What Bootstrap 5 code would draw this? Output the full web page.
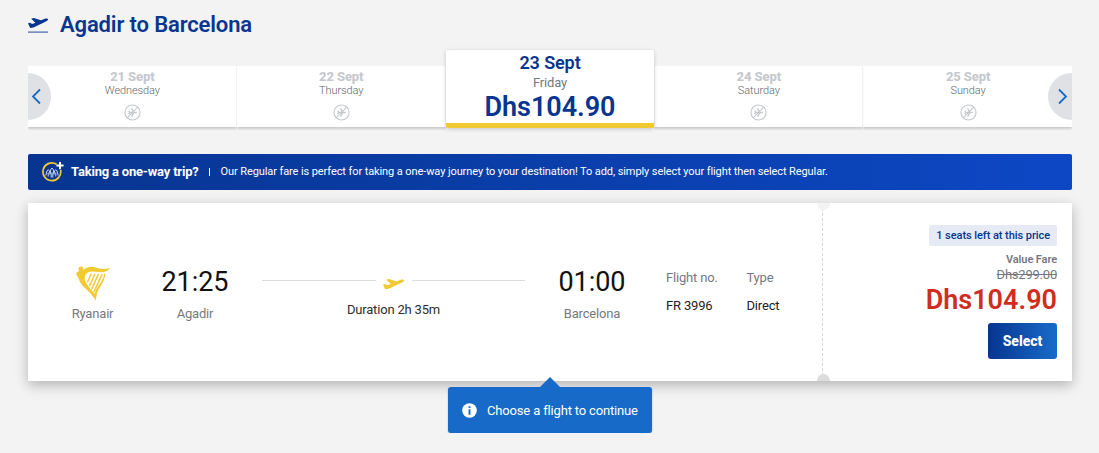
<!DOCTYPE html>
<html lang="en">
<head>
  <meta charset="UTF-8">
  <meta name="viewport" content="width=device-width, initial-scale=1">
  <title>Agadir to Barcelona</title>
  <link href="https://cdn.jsdelivr.net/npm/bootstrap@5.3.0/dist/css/bootstrap.min.css" rel="stylesheet">
  <style>
    body {
        background: #f3f3f3;
        font-family: Roboto, "Liberation Sans", sans-serif;
        color: #2e2e2e;
        overflow: hidden;
    }

    .flights-page {
        width: 1044px;
        margin-left: 28px;
    }

    .txt-navy { color: #073590; }
    .txt-grey { color: #75797f; }

    .journey-title {
        font-size: 22px;
        font-weight: 600;
        line-height: 26px;
        letter-spacing: -0.14px;
        padding-top: 12px;
        height: 50px;
    }

    .journey-title span { margin-left: 12px; }

    /* date carousel */
    .date-strip {
        height: 78px;
    }

    .date-item {
        width: 209px;
        height: 61px;
        margin-bottom: 1px;
        background: #fff;
        border-right: 1px solid #f3f3f3;
        box-shadow: 0 2px 2px rgba(0, 0, 0, 0.16);
        padding: 3px 0 0 1px;
        clip-path: inset(0 0 -6px 0);
    }

    .date-item .date-day {
        font-size: 13px;
        font-weight: 800;
        line-height: 15px;
        letter-spacing: -0.1px;
        color: #c5c8cd;
    }

    .date-item .date-weekday {
        font-size: 11px;
        line-height: 13px;
        letter-spacing: -0.1px;
        color: #62666c;
        font-weight: 300;
        margin-bottom: 7px;
    }

    .date-item.selected {
        height: 78px;
        margin-bottom: 0;
        border-right: 0;
        border-bottom: 5px solid #f1c933;
        border-radius: 2px;
        box-shadow: 0 1px 4px rgba(0, 0, 0, 0.2);
        clip-path: none;
        z-index: 1;
        padding: 2px 0 0;
    }

    .selected .date-day {
        font-size: 18px;
        font-weight: 600;
        line-height: 22px;
        color: #073590;
    }

    .selected .date-weekday {
        font-size: 13px;
        font-weight: 400;
        line-height: 17px;
        letter-spacing: -0.15px;
        margin-bottom: 0;
        color: #75797f;
    }

    .date-price {
        font-size: 27px;
        font-weight: 600;
        line-height: 33px;
        letter-spacing: -0.05px;
        color: #073590;
    }

    .arrow-btn {
        position: absolute;
        top: 23px;
        width: 23px;
        height: 47px;
        background: #dfe1e4;
        border: 0;
        padding: 0;
        z-index: 2;
    }

    .arrow-prev { left: 0; border-radius: 0 24px 24px 0; }
    .arrow-next { right: 0; width: 24px; border-radius: 24px 0 0 24px; }

    /* one way banner */
    .fare-banner {
        margin-top: 26px;
        height: 36px;
        padding-left: 14px;
        border-radius: 2px;
        background: linear-gradient(90deg, #073590, #0d47c4);
        color: #fff;
        font-size: 11px;
        letter-spacing: -0.093px;
    }

    .fare-banner strong {
        font-size: 13px;
        font-weight: 700;
        letter-spacing: -0.2px;
        margin-left: 6px;
    }

    .banner-sep {
        width: 1px;
        height: 8px;
        background: #fff;
        margin: 0 11px 0 10px;
    }

    /* flight card */
    .flight-card {
        margin-top: 13px;
        height: 178px;
        background: #fff;
        box-shadow: 0 4px 12px rgba(0, 0, 0, 0.27);
        font-size: 13px;
        letter-spacing: -0.18px;
    }

    .flight-info {
        width: 795px;
        padding: 62px 0 0 32px;
        border-right: 1px dashed #d8d8d8;
        position: relative;
    }

    .notch {
        position: absolute;
        right: -8px;
        width: 13px;
        height: 7px;
    }

    .notch-top { top: 0; background: #f3f3f3; border-radius: 0 0 7px 7px; }
    .notch-bottom { bottom: 0; background: #dcdcdc; border-radius: 7px 7px 0 0; }

    .airline { width: 65px; }
    .airline svg { height: 38px; }

    .place-time {
        width: 67px;
        margin-left: 36.5px;
        white-space: nowrap;
    }

    .clock {
        font-size: 27px;
        line-height: 35px;
        height: 38px;
        letter-spacing: -0.05px;
        color: #111;
    }

    .place-label { line-height: 22px; }

    .route {
        width: 263px;
        margin: 11px 0 0 33.5px;
    }

    .route-line {
        height: 1px;
        background: #dcdcdc;
        margin-top: 4px;
    }

    .route-duration {
        line-height: 18px;
        margin-top: 7px;
    }

    .place-arrival { margin-left: 33.5px; }

    .detail-col {
        line-height: 18px;
        padding-top: 4px;
    }

    .detail-number {
        width: 80.5px;
        margin-left: 40.5px;
    }

    .detail-col div + div {
        margin-top: 10px;
        color: #222;
    }

    .fare-side {
        padding: 22px 15px 0 0;
    }

    .seats-left {
        background: #e6eaf4;
        border-radius: 2px;
        height: 21px;
        line-height: 21px;
        padding: 0 7px;
        font-size: 11px;
        font-weight: 500;
        letter-spacing: -0.06px;
    }

    .value-fare {
        font-size: 11px;
        font-weight: 600;
        letter-spacing: -0.1px;
        line-height: 15px;
        margin-top: 6px;
    }

    .old-price {
        font-size: 13px;
        line-height: 15px;
        letter-spacing: -0.22px;
    }

    .new-price {
        font-size: 27px;
        font-weight: 600;
        line-height: 31px;
        height: 41px;
        letter-spacing: 0;
        padding-top: 3px;
        color: #d12d1f;
    }

    .select-btn {
        width: 69px;
        height: 36px;
        border: 0;
        border-radius: 3px;
        padding: 0;
        color: #fff;
        font-size: 14px;
        font-weight: 800;
        background: linear-gradient(90deg, #073590, #186bc9);
    }

    /* hint below the card */
    .choose-hint {
        position: relative;
        width: 204px;
        height: 46px;
        margin: 6px 0 0 420px;
        padding: 1px 0 0 14px;
        background: #176ac8;
        border-radius: 3px;
        box-shadow: 0 1px 2px rgba(0, 0, 0, 0.25);
        color: #fff;
        font-size: 13px;
        letter-spacing: -0.16px;
        gap: 10px;
    }

    .choose-hint::before {
        content: "";
        position: absolute;
        left: 92px;
        top: -10px;
        border: 10px solid transparent;
        border-top: 0;
        border-bottom-color: #176ac8;
    }
  </style>
</head>
<body>
<svg width="0" height="0" class="position-absolute">
  <symbol id="plane" viewBox="0 0 20 10">
    <path d="M0 5.200 2 4.800l2.200 1.200L7.400 4.700 3.200.8 5.900 0l7 2.300 4-1.500c1.700-.6 3.100-.2 3.100.7 0 .8-.8 1.300-2.100 1.900L5.500 9.400 2.200 9.900z"/>
  </symbol>
  <symbol id="noFlight" viewBox="0 0 18 18">
    <g fill="none" stroke="#c5c8cd">
      <circle cx="9" cy="9" r="8" stroke-width="1.200"/>
      <path d="M3.300 14.700 14.700 3.300" stroke-width="1.100"/>
      <path d="M5 9h8.500M8 4.600 10.400 9 8 13.400M5 7.200 6.200 9 5 10.800" stroke-width="1.400"/>
    </g>
  </symbol>
</svg>

<main class="flights-page">
  <h1 class="journey-title txt-navy d-flex m-0">
    <svg class="mt-1" width="20" height="18" viewBox="0 0 20 18" fill="#073590">
      <use href="#plane" y="2" width="20" height="10"/>
      <path d="M0 15.500h20v1.200H0z" opacity=".75"/>
    </svg>
    <span>Agadir to Barcelona</span>
  </h1>

  <div class="date-strip d-flex align-items-end text-center position-relative">
    <button class="arrow-btn arrow-prev" aria-label="Previous">
      <svg class="d-block" width="23" height="47" fill="none" stroke="#176ac8" stroke-width="1.800"><path d="M12 16.500 5 23.500l7 7"/></svg>
    </button>
    <div class="date-item">
      <div class="date-day">21 Sept</div>
      <div class="date-weekday">Wednesday</div>
      <svg class="d-block mx-auto" width="17" height="17"><use href="#noFlight"/></svg>
    </div>
    <div class="date-item">
      <div class="date-day">22 Sept</div>
      <div class="date-weekday">Thursday</div>
      <svg class="d-block mx-auto" width="17" height="17"><use href="#noFlight"/></svg>
    </div>
    <div class="date-item selected">
      <div class="date-day">23 Sept</div>
      <div class="date-weekday">Friday</div>
      <div class="date-price">Dhs104.90</div>
    </div>
    <div class="date-item">
      <div class="date-day">24 Sept</div>
      <div class="date-weekday">Saturday</div>
      <svg class="d-block mx-auto" width="17" height="17"><use href="#noFlight"/></svg>
    </div>
    <div class="date-item border-end-0">
      <div class="date-day">25 Sept</div>
      <div class="date-weekday">Sunday</div>
      <svg class="d-block mx-auto" width="17" height="17"><use href="#noFlight"/></svg>
    </div>
    <button class="arrow-btn arrow-next" aria-label="Next">
      <svg class="d-block" width="23" height="47" fill="none" stroke="#176ac8" stroke-width="1.800"><path d="m11 16.500 7 7-7 7"/></svg>
    </button>
  </div>

  <div class="fare-banner d-flex align-items-center text-nowrap">
    <svg width="23" height="22" viewBox="0 0 23 22" fill="none">
      <path d="M14.600 3.200A8.900 8.900 0 1 0 18.600 9" stroke="#f1c933" stroke-width="1.700"/>
      <path d="M18 1v7.200M14.400 4.600h7.200" stroke="#fff" stroke-width="2"/>
      <g stroke="#fff" stroke-width=".8">
        <path d="M3.800 14.500 5 9.800q1.200-2 2.400 0l.5 2.700M6.200 11.500v4M7.900 13.500l.9-5.300q1.200-2 2.400 0l.9 5.300M9.200 11.600v5M10.800 11.600v5M12.100 12.500l.5-2.700q1.200-2 2.400 0l1.200 4.700M13.800 11.500v4"/>
      </g>
    </svg>
    <strong>Taking a one-way trip?</strong>
    <span class="banner-sep"></span>
    <span>Our Regular fare is perfect for taking a one-way journey to your destination! To add, simply select your flight then select Regular.</span>
  </div>

  <div class="flight-card d-flex">
    <div class="flight-info d-flex align-items-start">
      <div class="airline text-center">
        <svg class="d-block mx-auto" width="34" height="38" viewBox="0 0 34 38" fill="#f1c933">
          <path d="M3.200 2.200c1.300-1.300 3.600-.8 4 .9.100.9 0 1.600-.5 2.100C12 1.600 15.600 1.200 19.500 2.600c4.500 1.500 8.500 1.900 14.500.5-2.300 3.600-6.600 4.700-11.300 4C17 6.300 12.500 6 9.700 9.300c-1.600 2.300-1.300 5.500.9 9.200 2.500 4.200 6.600 8.400 8.800 11.300L19.700 35.500C16.500 29.400 10.600 25 6.300 20.300 2.800 16.300 3.300 13.500 1.200 11-.1 9.300-.1 7.800 1.300 7l2-.9C2.300 4.900 2.100 3.300 3.200 2.200z"/>
          <path d="M29.500 8.200C29 15 25 20 22.400 25c-1.700 3.200-1.900 6-2.700 10.500l-1.400-5c.7-4.800 3-8 5.300-11.500 2.300-3.500 4.200-6.400 4.700-10.500z"/>
          <g fill="none" stroke="#f1c933" stroke-width="1.500" stroke-linecap="round">
            <path d="m15 9.200-3.400 7.600M18.800 9.200l-5.200 11.500M22.300 9.400l-6.500 14.500M26 9.600l-8 17.200"/>
          </g>
        </svg>
        <div class="place-label txt-grey">Ryanair</div>
      </div>
      <div class="place-time text-center">
        <div class="clock">21:25</div>
        <div class="place-label txt-grey">Agadir</div>
      </div>
      <div class="route text-center">
        <div class="d-flex">
          <div class="route-line" style="width: 114px"></div>
          <svg class="ms-auto me-2" width="21" height="18" viewBox="0 0 21 18" fill="#f1c933"><use href="#plane" y="3" width="21" height="10.500"/></svg>
          <div class="route-line" style="width: 113px"></div>
        </div>
        <div class="route-duration">Duration 2h 35m</div>
      </div>
      <div class="place-time place-arrival text-center">
        <div class="clock">01:00</div>
        <div class="place-label txt-grey">Barcelona</div>
      </div>
      <div class="detail-col detail-number">
        <div class="txt-grey">Flight no.</div>
        <div>FR 3996</div>
      </div>
      <div class="detail-col">
        <div class="txt-grey">Type</div>
        <div>Direct</div>
      </div>
      <span class="notch notch-top"></span>
      <span class="notch notch-bottom"></span>
    </div>
    <div class="fare-side d-flex flex-column align-items-end flex-grow-1">
      <div class="seats-left txt-navy">1 seats left at this price</div>
      <div class="value-fare txt-grey">Value Fare</div>
      <div class="old-price txt-grey text-decoration-line-through">Dhs299.00</div>
      <div class="new-price">Dhs104.90</div>
      <button class="select-btn">Select</button>
    </div>
  </div>

  <div class="choose-hint d-flex align-items-center text-nowrap">
    <svg width="15" height="15" viewBox="0 0 15 15">
      <circle cx="7.500" cy="7.500" r="7.300" fill="#fff"/>
      <path d="M7.500 3.300v1.800M7.500 6.200v5.500" stroke="#176ac8" stroke-width="1.900"/>
    </svg>
    <span>Choose a flight to continue</span>
  </div>
</main>

<script src="https://cdn.jsdelivr.net/npm/bootstrap@5.3.0/dist/js/bootstrap.bundle.min.js"></script>
</body>
</html>
